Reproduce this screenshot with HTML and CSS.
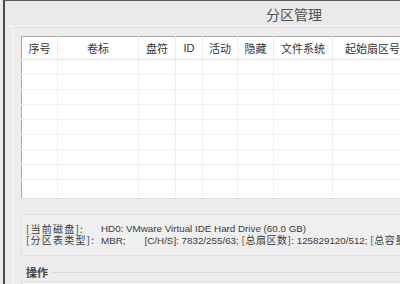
FILE: index.html
```html
<!DOCTYPE html>
<html lang="zh-CN">
<head>
    <meta charset="UTF-8">
    <title>分区管理</title>
    <link rel="stylesheet" href="styles.css">
</head>
<body>
    <div class="window">
        <div class="title-bar">分区管理</div>

        <div class="panel">
            <table class="part-table">
                <colgroup>
                    <col style="width: 36px">
                    <col style="width: 81px">
                    <col style="width: 37px">
                    <col style="width: 27px">
                    <col style="width: 35px">
                    <col style="width: 36px">
                    <col style="width: 59px">
                    <col style="width: 80px">
                    <col>
                </colgroup>
                <thead>
                    <tr>
                        <th>序号</th>
                        <th>卷标</th>
                        <th>盘符</th>
                        <th class="latin">ID</th>
                        <th>活动</th>
                        <th>隐藏</th>
                        <th>文件系统</th>
                        <th>起始扇区号</th>
                        <th></th>
                    </tr>
                </thead>
                <tbody>
                    <tr><td></td><td></td><td></td><td></td><td></td><td></td><td></td><td></td><td></td></tr>
                    <tr><td></td><td></td><td></td><td></td><td></td><td></td><td></td><td></td><td></td></tr>
                    <tr><td></td><td></td><td></td><td></td><td></td><td></td><td></td><td></td><td></td></tr>
                    <tr><td></td><td></td><td></td><td></td><td></td><td></td><td></td><td></td><td></td></tr>
                    <tr><td></td><td></td><td></td><td></td><td></td><td></td><td></td><td></td><td></td></tr>
                    <tr><td></td><td></td><td></td><td></td><td></td><td></td><td></td><td></td><td></td></tr>
                    <tr><td></td><td></td><td></td><td></td><td></td><td></td><td></td><td></td><td></td></tr>
                    <tr><td></td><td></td><td></td><td></td><td></td><td></td><td></td><td></td><td></td></tr>
                    <tr><td></td><td></td><td></td><td></td><td></td><td></td><td></td><td></td><td></td></tr>
                </tbody>
            </table>

            <div class="disk-info">
                <div class="info-row">
                    <span class="info-label">[当前磁盘]:</span>
                    <span class="info-value">HD0: VMware Virtual IDE Hard Drive (60.0 GB)</span>
                </div>
                <div class="info-row">
                    <span class="info-label">[分区表类型]:</span>
                    <span class="info-value">MBR;&nbsp;&nbsp;&nbsp;&nbsp;&nbsp;&nbsp; [C/H/S]: 7832/255/63; <span class="cjk">[总扇区数]</span>: 125829120/512; <span class="cjk">[总容量]</span>: 60.0 GB</span>
                </div>
            </div>

            <div class="ops">
                <div class="ops-head">
                    <span class="ops-label">操作</span>
                    <span class="ops-line"></span>
                </div>
                <div class="ops-box"></div>
            </div>
        </div>
    </div>
</body>
</html>
```

FILE: styles.css
```css
* {
    margin: 0;
    padding: 0;
    box-sizing: border-box;
}

body {
    margin: 0;
    width: 400px;
    height: 284px;
    overflow: hidden;
    background: #ebebeb;
    font-family: "Noto Sans CJK SC", "Liberation Sans", sans-serif;
    color: #333;
}

.window {
    width: 580px;
    height: 284px;
    margin-left: 3px;
    border-left: 2px solid #4a4a4a;
    border-top: 1px solid #5a5a5a;
    background: #eaeaea;
}

.title-bar {
    height: 26px;
    line-height: 26px;
    text-align: center;
    font-size: 14px;
    color: #505050;
    border-bottom: 1px solid #f6f6f6;
}

.panel {
    margin-left: 7px;
    padding: 8px 0 0 8px;
    border-left: 1px solid #f8f8f8;
    border-top: 1px solid #dcdcdc;
    background: #ededed;
    height: 260px;
}

.part-table {
    width: 600px;
    table-layout: fixed;
    border-collapse: collapse;
    background: #fff;
    border-left: 1px solid #a9a9a9;
    border-top: 1px solid #a9a9a9;
}

.part-table th {
    height: 23px;
    font-size: 11px;
    font-weight: normal;
    color: #333;
    text-align: center;
    border-right: 1px solid #ececec;
    border-bottom: 1px solid #e6e6e6;
    white-space: nowrap;
}

.part-table th.latin {
    font-family: "Liberation Sans", sans-serif;
}

.part-table td {
    height: 15px;
    border-right: 1px solid #efefef;
    border-bottom: 1px solid #f0f0f0;
}

.part-table tbody tr:last-child td {
    height: 19px;
    border-bottom: 1px solid #dedede;
}

.disk-info {
    margin-top: 15px;
    height: 42px;
    padding: 8px 0 0 4px;
    background: #efefef;
    border: 1px solid #e0e0e0;
    border-right: none;
    font-size: 10px;
    line-height: 11px;
    color: #3a3a3a;
}

.info-row {
    display: flex;
    white-space: nowrap;
    height: 11px;
}

.info-label {
    width: 75px;
    flex-shrink: 0;
    letter-spacing: 1.2px;
}

.info-value {
    font-family: "Liberation Sans", "Noto Sans CJK SC", sans-serif;
    font-size: 9.8px;
}

.info-value .cjk {
    font-family: "Noto Sans CJK SC", sans-serif;
    font-size: 10px;
    letter-spacing: 0.5px;
}

.ops {
    margin-top: 9px;
}

.ops-head {
    display: flex;
    align-items: center;
    height: 14px;
}

.ops-label {
    font-size: 11px;
    font-weight: bold;
    color: #444;
    padding: 0 4px 0 5px;
    line-height: 14px;
}

.ops-line {
    flex: 1;
    border-top: 1px solid #dadada;
}

.ops-box {
    height: 12px;
    margin-top: 2px;
    border-top: 1px solid #e2e2e2;
    border-left: 1px solid #dadada;
    background: #f0f0f0;
}
```
